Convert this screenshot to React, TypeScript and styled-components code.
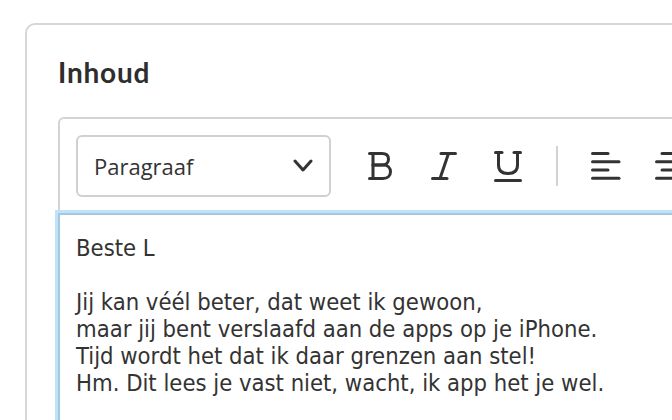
import React from "react";
import styled, { createGlobalStyle } from "styled-components";

const Global = createGlobalStyle`
  html, body { margin: 0; padding: 0; background: #ffffff; overflow: hidden; }
  body { width: 672px; height: 420px; }
`;

const Page = styled.div`
  padding: 23px 0 0 25px;
  width: 672px;
  height: 420px;
  box-sizing: border-box;
  overflow: hidden;
`;

const Card = styled.section`
  width: 900px;
  height: 700px;
  box-sizing: border-box;
  border: 2px solid #d6d6d6;
  border-radius: 10px;
  padding: 30px 31px;
  background: #fff;
`;

const Title = styled.h2`
  margin: 0 0 28px 0;
  font-family: Lato, "Open Sans", sans-serif;
  font-weight: 700;
  font-size: 28px;
  letter-spacing: 0.8px;
  line-height: 34px;
  color: #2e2e2e;
`;

const Editor = styled.div`
  border: 2px solid #d3d3d3;
  border-radius: 6px;
`;

const Toolbar = styled.div`
  display: flex;
  align-items: center;
  padding: 16px;
`;

const Select = styled.div`
  width: 255px;
  height: 62px;
  box-sizing: border-box;
  border: 2px solid #d0d0d0;
  border-radius: 6px;
  display: flex;
  align-items: center;
  justify-content: space-between;
  padding: 0 16px 0 16px;
  font-family: "Open Sans", sans-serif;
  font-size: 22px;
  color: #333;
  margin-right: 17px;
`;

const ToolButton = styled.div`
  width: 64px;
  height: 62px;
  display: flex;
  align-items: center;
  justify-content: center;
  flex: none;
`;

const Separator = styled.div`
  width: 2px;
  height: 40px;
  background: #d2d2d2;
  margin: 0 16px;
  flex: none;
`;

const Body = styled.div`
  margin: 0 -2px;
  border: 2px solid #a3c8df;
  box-shadow: 0 0 0 3px #c2e3f7;
  padding: 20px 16px 30px 16px;
  font-family: "DejaVu Sans Condensed", "DejaVu Sans", sans-serif;
  font-size: 23.6px;
  line-height: 27px;
  color: #333;
`;

const Para = styled.p`
  margin: 0 0 27px 0;
`;

const Icon = ({ w, h, children }: { w: number; h: number; children: React.ReactNode }) => (
  <svg width={w} height={h} viewBox={`0 0 ${w} ${h}`} fill="none" stroke="#333" strokeWidth={3} strokeLinecap="round" strokeLinejoin="round">
    {children}
  </svg>
);

export default function App() {
  return (
    <>
      <Global />
      <Page>
        <Card>
          <Title>Inhoud</Title>
          <Editor>
            <Toolbar>
              <Select>
                <span>Paragraaf</span>
                <svg width="20" height="14" viewBox="0 0 20 14" fill="none" stroke="#333" strokeWidth={3} strokeLinecap="round" strokeLinejoin="round">
                  <path d="M2 2 L10 11 L18 2" />
                </svg>
              </Select>
              <ToolButton>
                <Icon w={24} h={28}>
                  <path d="M1.5 1.5 H14 C18.5 1.5 20.5 4 20.5 7.2 C20.5 10.5 18 13 14 13 H5" />
                  <path d="M5 13 H15 C20 13 22.5 16 22.5 19.8 C22.5 24 19.5 26.5 15 26.5 H1.5" />
                  <path d="M5 1.5 V26.5" />
                </Icon>
              </ToolButton>
              <ToolButton>
                <Icon w={26} h={28}>
                  <path d="M10 1.5 H24.5" />
                  <path d="M1.5 26.5 H16" />
                  <path d="M17.5 1.5 L9 26.5" />
                </Icon>
              </ToolButton>
              <ToolButton>
                <Icon w={28} h={31}>
                  <path d="M1.5 1.5 H8" />
                  <path d="M20 1.5 H26.5" />
                  <path d="M4.5 1.5 V14 C4.5 19.5 8 22.5 14 22.5 C20 22.5 23.5 19.5 23.5 14 V1.5" />
                  <path d="M1.5 29.5 H26.5" />
                </Icon>
              </ToolButton>
              <Separator />
              <ToolButton>
                <Icon w={30} h={28}>
                  <path d="M1.5 1.5 H17" />
                  <path d="M1.5 9.8 H28" />
                  <path d="M1.5 18 H17" />
                  <path d="M1.5 26.3 H28" />
                </Icon>
              </ToolButton>
              <ToolButton>
                <Icon w={30} h={28}>
                  <path d="M7 1.5 H23" />
                  <path d="M1.5 9.8 H28.5" />
                  <path d="M7 18 H23" />
                  <path d="M1.5 26.3 H28.5" />
                </Icon>
              </ToolButton>
            </Toolbar>
            <Body>
              <Para>Beste L</Para>
              <Para>
                Jij kan véél beter, dat weet ik gewoon,
                <br />
                maar jij bent verslaafd aan de apps op je iPhone.
                <br />
                Tijd wordt het dat ik daar grenzen aan stel!
                <br />
                Hm. Dit lees je vast niet, wacht, ik app het je wel.
              </Para>
            </Body>
          </Editor>
        </Card>
      </Page>
    </>
  );
}
